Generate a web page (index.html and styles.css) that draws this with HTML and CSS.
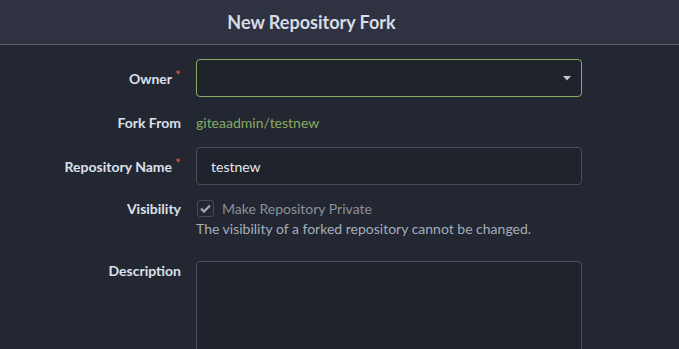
FILE: index.html
```html
<!DOCTYPE html>
<html lang="en">

<head>
    <meta charset="UTF-8">
    <meta name="viewport" content="width=device-width, initial-scale=1.0">
    <title>New Repository Fork</title>
    <link rel="stylesheet" href="styles.css">
</head>

<body>
    <h3 class="form-header">New Repository Fork</h3>
    <form class="fork-form">
        <div class="field field-owner">
            <label class="field-label required">Owner</label>
            <div class="dropdown">
                <span class="dropdown-text"></span>
                <svg class="caret" width="8" height="5" viewBox="0 0 8 5"><path d="M0 0h8L4 4.5z" fill="#c3c7cf"/></svg>
            </div>
        </div>

        <div class="field field-from">
            <label class="field-label">Fork From</label>
            <a class="fork-link" href="#">giteaadmin/testnew</a>
        </div>

        <div class="field field-name">
            <label class="field-label required" for="repo_name">Repository Name</label>
            <input class="text-input" type="text" id="repo_name" value="testnew">
        </div>

        <div class="field field-visibility">
            <label class="field-label">Visibility</label>
            <div class="visibility-box">
                <div class="checkbox-row">
                    <span class="checkbox">
                        <svg width="11" height="9" viewBox="0 0 11 9"><path d="M1 4.6l3 3L10 1.4" fill="none" stroke="#a3a7b0" stroke-width="2.2"/></svg>
                    </span>
                    <span class="checkbox-text">Make Repository Private</span>
                </div>
                <div class="help">The visibility of a forked repository cannot be changed.</div>
            </div>
        </div>

        <div class="field field-desc">
            <label class="field-label" for="description">Description</label>
            <textarea class="text-area" id="description"></textarea>
        </div>
    </form>
</body>

</html>
```

FILE: styles.css
```css
body {
    margin: 0;
    background-color: #232732;
    font-family: Lato, "Noto Sans", sans-serif;
    font-size: 14px;
    color: #dbe0ea;
    overflow: hidden;
}

.form-header {
    margin: 0;
    height: 44px;
    line-height: 44px;
    padding-right: 56px;
    text-align: center;
    font-size: 18px;
    font-weight: 700;
    color: #d7dce6;
    background-color: #2f3341;
    border-bottom: 1px solid #575c6c;
}

.field {
    display: flex;
    align-items: center;
}

.field-label {
    width: 196px;
    flex-shrink: 0;
    padding-right: 15px;
    box-sizing: border-box;
    text-align: right;
    font-size: 14px;
    font-weight: 700;
    color: #dbe0ea;
}

.required::after {
    content: "*";
    color: #d95c5c;
    font-weight: 400;
    position: relative;
    top: -4px;
    margin-left: 3px;
}

.field-owner {
    margin-top: 14px;
}

.dropdown {
    width: 386px;
    height: 38px;
    box-sizing: border-box;
    border: 1px solid #87ab63;
    border-radius: 4px;
    background-color: #1f232c;
    display: flex;
    align-items: center;
    justify-content: flex-end;
    padding-right: 10px;
}

.field-from {
    margin-top: 14px;
    line-height: 24px;
}

.fork-link {
    color: #87ab63;
    text-decoration: none;
    font-size: 14px;
}

.field-name {
    margin-top: 12px;
}

.text-input {
    width: 386px;
    height: 38px;
    box-sizing: border-box;
    border: 1px solid #4b4f5d;
    border-radius: 4px;
    background-color: #1f232c;
    color: #e6e9ef;
    font-family: inherit;
    font-size: 14px;
    padding: 0 14px;
    outline: none;
}

.field-visibility {
    margin-top: 15px;
    align-items: flex-start;
}

.field-visibility .field-label {
    line-height: 18px;
}

.checkbox-row {
    display: flex;
    align-items: center;
    height: 17px;
}

.checkbox {
    width: 17px;
    height: 17px;
    box-sizing: border-box;
    border: 1px solid #474b58;
    border-radius: 3px;
    margin-left: 1px;
    margin-right: 8px;
    display: flex;
    align-items: center;
    justify-content: center;
}

.checkbox-text {
    color: #8c909a;
}

.help {
    margin-top: 2px;
    line-height: 20px;
    font-size: 14px;
    color: #a3adbc;
}

.field-desc {
    margin-top: 22px;
    align-items: flex-start;
}

.field-desc .field-label {
    line-height: 20px;
}

.text-area {
    width: 386px;
    height: 120px;
    box-sizing: border-box;
    border: 1px solid #4b4f5d;
    border-radius: 4px;
    background-color: #1f232c;
    resize: none;
    outline: none;
}
```
